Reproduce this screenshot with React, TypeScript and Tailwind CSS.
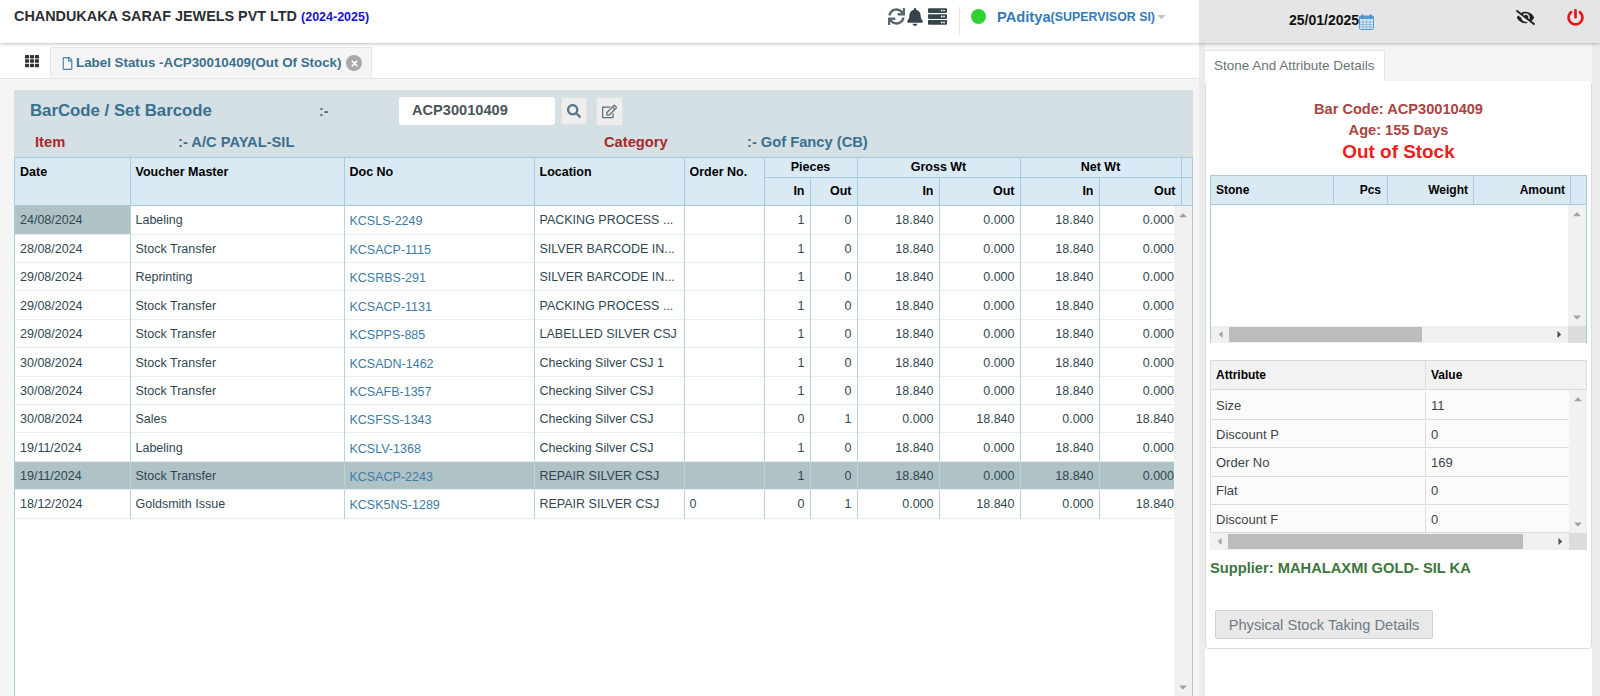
import { FaSync, FaBell, FaServer, FaTh, FaSearch, FaRegEdit, FaRegFile, FaEyeSlash, FaPowerOff, FaCaretDown, FaCaretUp, FaCaretLeft, FaCaretRight, FaTimes } from 'react-icons/fa';

const rows = [
  ['24/08/2024', 'Labeling', 'KCSLS-2249', 'PACKING PROCESS ...', '', '1', '0', '18.840', '0.000', '18.840', '0.000'],
  ['28/08/2024', 'Stock Transfer', 'KCSACP-1115', 'SILVER BARCODE IN...', '', '1', '0', '18.840', '0.000', '18.840', '0.000'],
  ['29/08/2024', 'Reprinting', 'KCSRBS-291', 'SILVER BARCODE IN...', '', '1', '0', '18.840', '0.000', '18.840', '0.000'],
  ['29/08/2024', 'Stock Transfer', 'KCSACP-1131', 'PACKING PROCESS ...', '', '1', '0', '18.840', '0.000', '18.840', '0.000'],
  ['29/08/2024', 'Stock Transfer', 'KCSPPS-885', 'LABELLED SILVER CSJ', '', '1', '0', '18.840', '0.000', '18.840', '0.000'],
  ['30/08/2024', 'Stock Transfer', 'KCSADN-1462', 'Checking Silver CSJ 1', '', '1', '0', '18.840', '0.000', '18.840', '0.000'],
  ['30/08/2024', 'Stock Transfer', 'KCSAFB-1357', 'Checking Silver CSJ', '', '1', '0', '18.840', '0.000', '18.840', '0.000'],
  ['30/08/2024', 'Sales', 'KCSFSS-1343', 'Checking Silver CSJ', '', '0', '1', '0.000', '18.840', '0.000', '18.840'],
  ['19/11/2024', 'Labeling', 'KCSLV-1368', 'Checking Silver CSJ', '', '1', '0', '18.840', '0.000', '18.840', '0.000'],
  ['19/11/2024', 'Stock Transfer', 'KCSACP-2243', 'REPAIR SILVER CSJ', '', '1', '0', '18.840', '0.000', '18.840', '0.000'],
  ['18/12/2024', 'Goldsmith Issue', 'KCSK5NS-1289', 'REPAIR SILVER CSJ', '0', '0', '1', '0.000', '18.840', '0.000', '18.840'],
];

const attributes = [
  ['Size', '11'],
  ['Discount P', '0'],
  ['Order No', '169'],
  ['Flat', '0'],
  ['Discount F', '0'],
];

const headCell = 'border-r border-b border-[#a9cbdc] px-[5px] font-bold text-black align-top';
const colWidths = [115, 214, 190, 150, 80, 46, 47, 82, 81, 79];

function CalendarIcon() {
  return (
    <svg width="15" height="16" viewBox="0 0 15 16" className="mt-[2px]">
      <rect x="0.5" y="2" width="14" height="13.5" rx="1" fill="#dbe9f5" stroke="#5b9bd5" />
      <rect x="0.5" y="2" width="14" height="3" fill="#5b9bd5" />
      <path d="M3.5 0.5v3M11.5 0.5v3" stroke="#3f7fb8" strokeWidth="1.4" />
      <path d="M1 8h13M1 10.5h13M1 13h13M4 5v10M7.5 5v10M11 5v10" stroke="#7fb0dc" strokeWidth="0.8" />
    </svg>
  );
}

function HScroll({ thumb }: { thumb: string }) {
  return (
    <div className="flex h-[17px] bg-[#f1f1f1]">
      <div className="w-[18px] flex items-center justify-center text-[#a3a3a3]"><FaCaretLeft size={11} /></div>
      <div className="flex-1 flex items-center">
        <div className={`h-[15px] bg-[#bcbcbc] ${thumb}`} />
      </div>
      <div className="w-[18px] flex items-center justify-center text-[#505050]"><FaCaretRight size={11} /></div>
      <div className="w-[18px] bg-[#dcdcdc]" />
    </div>
  );
}

function VScroll() {
  return (
    <div className="w-[18px] shrink-0 bg-[#f1f1f1] flex flex-col justify-between items-center py-[3px] text-[#a3a3a3]">
      <FaCaretUp size={12} />
      <FaCaretDown size={12} />
    </div>
  );
}

export default function App() {
  return (
    <div className="h-[696px] w-[1600px] overflow-hidden flex flex-col bg-white text-[12.5px] text-[#2f4753] font-['Liberation_Sans',Arial,sans-serif]">
      {/* top bar */}
      <header className="h-[43px] shrink-0 flex shadow-[0_1px_3px_rgba(0,0,0,0.25)] z-10 relative">
        <div className="w-[1199px] bg-white flex items-center pl-[14px] pb-[9px]">
          <span className="text-[14.4px] font-bold text-[#2b2f33]">CHANDUKAKA SARAF JEWELS PVT LTD</span>
          <span className="text-[12.5px] font-bold text-[#1414d2] ml-[4px]">(2024-2025)</span>
          <div className="ml-auto flex items-center text-[#36454d]">
            <FaSync size={17} className="text-[#56666e]" />
            <FaBell size={18} className="ml-px" />
            <FaServer size={19} className="ml-[4px]" />
            <div className="w-px h-[28px] bg-[#e5e5e5] ml-[12px] -mb-[9px]" />
            <div className="w-[15px] h-[15px] rounded-full bg-[#2fd133] ml-[11px]" />
            <span className="text-[14.7px] font-bold text-[#337ab7] ml-[11px]">PAditya</span>
            <span className="text-[12.4px] font-bold text-[#337ab7]">(SUPERVISOR SI)</span>
            <FaCaretDown size={13} className="text-[#c4c4c4] mr-[31px]" />
          </div>
        </div>
        <div className="flex-1 bg-[#e3e5e6] flex items-center pb-[2px]">
          <span className="ml-[90px] text-[14px] font-bold text-[#111]">25/01/2025</span>
          <CalendarIcon />
          <FaEyeSlash size={19} className="ml-[142px] mb-[6px] text-[#222]" />
          <FaPowerOff size={17} className="ml-[32px] mb-[6px] text-[#e8141a]" />
        </div>
      </header>

      <div className="flex-1 flex min-h-0">
        {/* left side */}
        <main className="w-[1199px] shrink-0 flex flex-col">
          <div className="h-[36px] shrink-0 flex items-end pl-[14px] border-b border-[#e6e6e6]">
            <div className="w-[36px] h-[31px] flex items-center justify-center text-[#333] bg-white">
              <FaTh size={14} className="mb-[3px]" />
            </div>
            <div className="h-[31px] w-[322px] bg-[#f5f5f5] border border-b-0 border-[#e6e6e6] flex items-center pl-[10px] text-[13.35px] font-bold text-[#3a6f8c]">
              <FaRegFile size={13} className="text-[#4d87a8] mr-[2px]" />
              Label Status -ACP30010409(Out Of Stock)
              <span className="ml-[5px] w-[16px] h-[16px] rounded-full bg-[#a9a9a9] flex items-center justify-center text-white">
                <FaTimes size={9} />
              </span>
            </div>
          </div>

          <div className="flex-1 min-h-0 bg-[#f5f5f5] pt-[11px] pl-[14px] pr-[6px]">
            <div className="h-full flex flex-col bg-[#d5e0e5]">
              <div className="h-[35px] shrink-0 flex items-center pt-[7px]">
                <span className="w-[305px] pl-[16px] text-[16.8px] font-bold text-[#39708f]">BarCode / Set Barcode</span>
                <span className="w-[80px] text-[14px] font-bold text-[#39708f]">:-</span>
                <div className="w-[156px] h-[28px] rounded-[3px] bg-white flex items-center pl-[13px] text-[14.6px] font-bold text-[#4b5459]">ACP30010409</div>
                <button className="ml-[6px] w-[26px] h-[28px] rounded-[2px] bg-[#eeeeee] border border-[#dfe3e5] flex items-center justify-center text-[#5a7583]"><FaSearch size={14} /></button>
                <button className="ml-[9px] w-[27px] h-[29px] rounded-[2px] bg-[#eeeeee] border border-[#dfe3e5] flex items-center justify-center text-[#5e6f78]"><FaRegEdit size={15} /></button>
              </div>
              <div className="h-[32px] shrink-0 flex items-center pt-[2px] text-[14.7px] font-bold">
                <span className="w-[164px] pl-[21px] text-[#a52a2a]">Item</span>
                <span className="w-[426px] text-[#39708f]">:- A/C PAYAL-SIL</span>
                <span className="w-[143px] text-[#a52a2a]">Category</span>
                <span className="text-[#39708f]">:- Gof Fancy (CB)</span>
              </div>

              {/* grid */}
              <div className="flex-1 min-h-0 flex flex-col bg-white border-x border-[#a9cbdc]">
                <table className="w-full table-fixed border-collapse bg-[#d9eaf4] text-[12.5px] shrink-0">
                  <colgroup>
                    {colWidths.map((w, i) => <col key={i} style={{ width: w }} />)}
                    <col style={{ width: 82 }} />
                    <col />
                  </colgroup>
                  <thead>
                    <tr className="h-[19px] border-t border-[#a9cbdc]">
                      <th rowSpan={2} className={`${headCell} text-left pt-[5px]`}>Date</th>
                      <th rowSpan={2} className={`${headCell} text-left pt-[5px]`}>Voucher Master</th>
                      <th rowSpan={2} className={`${headCell} text-left pt-[5px]`}>Doc No</th>
                      <th rowSpan={2} className={`${headCell} text-left pt-[5px]`}>Location</th>
                      <th rowSpan={2} className={`${headCell} text-left pt-[5px]`}>Order No.</th>
                      <th colSpan={2} className={`${headCell} text-center`}>Pieces</th>
                      <th colSpan={2} className={`${headCell} text-center`}>Gross Wt</th>
                      <th colSpan={2} className={`${headCell} text-center`}>Net Wt</th>
                      <th className="border-b border-[#a9cbdc]" />
                    </tr>
                    <tr className="h-[28px]">
                      {['In', 'Out', 'In', 'Out', 'In', 'Out'].map((t, i) => (
                        <th key={i} className="border-r border-b border-[#a9cbdc] pr-[5px] text-right font-bold text-black align-middle">{t}</th>
                      ))}
                      <th className="border-b border-[#a9cbdc]" />
                    </tr>
                  </thead>
                </table>
                <div className="flex-1 min-h-0 flex">
                  <div className="flex-1 min-w-0">
                    <table className="w-full table-fixed border-collapse">
                      <colgroup>
                        {colWidths.map((w, i) => <col key={i} style={{ width: w }} />)}
                      </colgroup>
                      <tbody>
                        {rows.map((r, i) => (
                          <tr key={i} className={`h-[28.4px] border-b border-[#e4eef3] ${i === 9 ? 'bg-[#afc2c5]' : ''}`}>
                            {r.map((c, j) => (
                              <td
                                key={j}
                                className={`border-r border-[#b9d3df] whitespace-nowrap overflow-hidden ${j >= 5 ? 'text-right' : 'text-left'} ${j === 9 ? 'pr-[5px]' : ''} ${j === 10 ? 'border-r-0' : ''} ${j >= 5 && j < 9 ? 'pr-[5px]' : ''} ${j < 5 ? 'pl-[5px]' : ''} ${j === 2 ? 'text-[#3d7ba6] pt-[4px]' : 'pt-[2px]'} ${i === 0 && j === 0 ? 'bg-[#afc2c5]' : ''}`}
                              >
                                {c}
                              </td>
                            ))}
                          </tr>
                        ))}
                      </tbody>
                    </table>
                  </div>
                  <VScroll />
                </div>
              </div>
            </div>
          </div>
        </main>

        {/* right side */}
        <aside className="flex-1 min-w-0 bg-white border-l-[6px] border-r-[8px] border-[#ebebeb] flex flex-col">
          <div className="h-[38px] shrink-0 bg-[#f4f4f4] flex items-end">
            <div className="w-[180px] h-[31px] bg-white border-t border-r border-[#e4e4e4] flex items-center pl-[9px] text-[13.5px] text-[#6b7378]">Stone And Attribute Details</div>
          </div>
          <div className="h-[568px] shrink-0 bg-white rounded-[4px] border border-t-0 border-[#dcdcdc] px-[4px] flex flex-col">
            <div className="h-[94px] shrink-0 flex flex-col items-center font-bold pt-[18px]">
              <div className="h-[21px] text-[14.6px] leading-[21px] text-[#a94442]">Bar Code: ACP30010409</div>
              <div className="h-[21px] text-[14.6px] leading-[21px] text-[#a94442]">Age: 155 Days</div>
              <div className="h-[24px] text-[18.9px] leading-[22px] text-[#f01c1c]">Out of Stock</div>
            </div>
            <div className="h-[168px] shrink-0 flex flex-col border-x border-[#a9cbdc]">
              <div className="h-[30px] shrink-0 flex bg-[#d9eaf4] border-y border-[#a9cbdc] text-[12px] font-bold text-black items-center">
                <div className="w-[123px] h-full flex items-center pl-[5px] border-r border-[#a9cbdc]">Stone</div>
                <div className="w-[54px] h-full flex items-center justify-end pr-[6px] border-r border-[#a9cbdc]">Pcs</div>
                <div className="w-[86px] h-full flex items-center justify-end pr-[5px] border-r border-[#a9cbdc]">Weight</div>
                <div className="w-[97px] h-full flex items-center justify-end pr-[5px] border-r border-[#a9cbdc]">Amount</div>
              </div>
              <div className="flex-1 min-h-0 flex">
                <div className="flex-1" />
                <VScroll />
              </div>
              <HScroll thumb="w-[193px]" />
            </div>

            <div className="mt-[17px] shrink-0 text-[13px] text-[#3d4448]">
              <div className="h-[30px] flex items-center bg-[#f2f2f2] border border-[#dcdcdc] font-bold text-black text-[12px]">
                <div className="w-[215px] h-full flex items-center pl-[5px] border-r border-[#dcdcdc]">Attribute</div>
                <div className="pl-[5px]">Value</div>
              </div>
              <div className="flex h-[143px] border-l border-[#dcdcdc]">
                <div className="flex-1">
                  {attributes.map(([k, v], i) => (
                    <div key={k} className={`${i === 0 ? 'h-[30px]' : 'h-[28.25px]'} flex items-center pt-[2px] bg-[#fbfbfb] border-b border-[#dcdcdc]`}>
                      <div className="w-[215px] h-full flex items-center pl-[5px] border-r border-[#dcdcdc]">{k}</div>
                      <div className="pl-[5px]">{v}</div>
                    </div>
                  ))}
                </div>
                <VScroll />
              </div>
              <HScroll thumb="w-[295px]" />
            </div>

            <div className="mt-[7px] text-[14.7px] font-bold text-[#3c763d]">Supplier: MAHALAXMI GOLD- SIL KA</div>
            <button className="mt-[31px] ml-[5px] w-[218px] h-[29px] shrink-0 bg-[#e9e9e9] border border-[#cfcfcf] rounded-[2px] text-[14.7px] text-[#6d7b85]">Physical Stock Taking Details</button>
          </div>
        </aside>
      </div>
    </div>
  );
}
